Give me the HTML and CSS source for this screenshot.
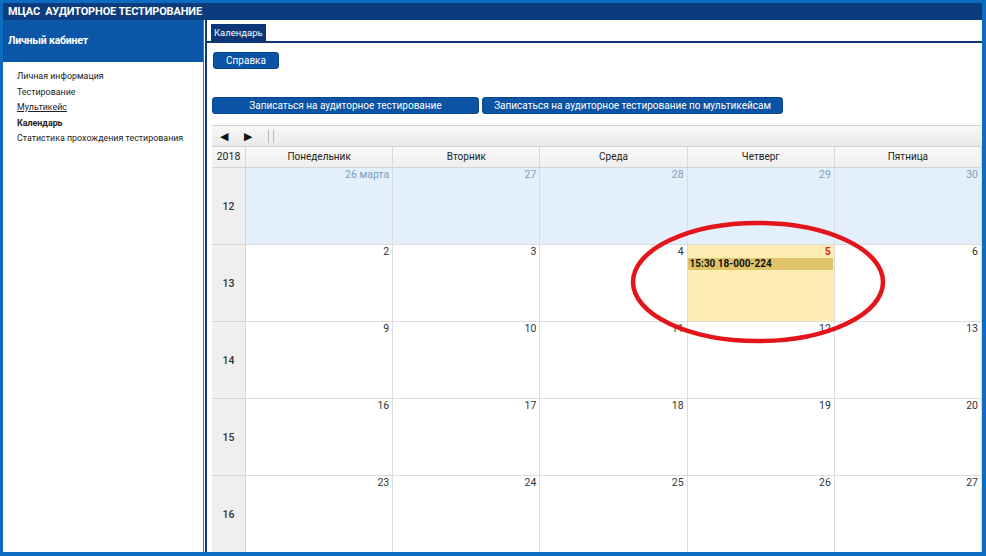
FILE: index.html
```html
<!DOCTYPE html>
<html lang="ru">
<head>
<meta charset="utf-8">
<title>МЦАС</title>
<link rel="stylesheet" href="styles.css">
</head>
<body>
<div class="frame">
  <header class="topbar">МЦАС&nbsp; АУДИТОРНОЕ ТЕСТИРОВАНИЕ</header>
  <div class="body">
    <aside class="sidebar">
      <div class="side-head">Личный кабинет</div>
      <ul class="menu">
        <li>Личная информация</li>
        <li>Тестирование</li>
        <li class="link">Мультикейс</li>
        <li class="active">Календарь</li>
        <li>Статистика прохождения тестирования</li>
      </ul>
    </aside>
    <main class="main">
      <div class="tabs"><span class="tab">Календарь</span></div>
      <div class="panel">
        <div class="help-row"><button class="btn btn-help">Справка</button></div>
        <div class="actions">
          <button class="btn btn-wide1">Записаться на аудиторное тестирование</button>
          <button class="btn btn-wide2">Записаться на аудиторное тестирование по мультикейсам</button>
        </div>
        <div class="calendar">
          <div class="toolbar">
            <span class="arrow">&#9664;</span>
            <span class="arrow">&#9654;</span>
            <span class="sep"></span><span class="sep"></span>
          </div>
          <div class="grid">
            <div class="hd year">2018</div>
            <div class="hd">Понедельник</div>
            <div class="hd">Вторник</div>
            <div class="hd">Среда</div>
            <div class="hd">Четверг</div>
            <div class="hd">Пятница</div>

            <div class="wk">12</div>
            <div class="day cur"><span class="num">26 марта</span></div>
            <div class="day cur"><span class="num">27</span></div>
            <div class="day cur"><span class="num">28</span></div>
            <div class="day cur"><span class="num">29</span></div>
            <div class="day cur"><span class="num">30</span></div>

            <div class="wk">13</div>
            <div class="day"><span class="num">2</span></div>
            <div class="day"><span class="num">3</span></div>
            <div class="day"><span class="num">4</span></div>
            <div class="day today"><span class="num red">5</span><div class="event">15:30 18-000-224</div></div>
            <div class="day"><span class="num">6</span></div>

            <div class="wk">14</div>
            <div class="day"><span class="num">9</span></div>
            <div class="day"><span class="num">10</span></div>
            <div class="day"><span class="num">11</span></div>
            <div class="day"><span class="num">12</span></div>
            <div class="day"><span class="num">13</span></div>

            <div class="wk">15</div>
            <div class="day"><span class="num">16</span></div>
            <div class="day"><span class="num">17</span></div>
            <div class="day"><span class="num">18</span></div>
            <div class="day"><span class="num">19</span></div>
            <div class="day"><span class="num">20</span></div>

            <div class="wk">16</div>
            <div class="day"><span class="num">23</span></div>
            <div class="day"><span class="num">24</span></div>
            <div class="day"><span class="num">25</span></div>
            <div class="day"><span class="num">26</span></div>
            <div class="day"><span class="num">27</span></div>
          </div>
        </div>
      </div>
    </main>
  </div>
  <svg class="ring" width="270" height="132" viewBox="0 0 270 132"><ellipse cx="135" cy="66" rx="125" ry="59" fill="none" stroke="#e4141b" stroke-width="4.5"/></svg>
</div>
</body>
</html>
```
FILE: styles.css
```css
* { box-sizing: border-box; }
html, body { margin: 0; padding: 0; }
body {
  font-family: Roboto, "Liberation Sans", Arial, sans-serif;
  background: #ffffff;
  width: 986px;
  height: 556px;
  overflow: hidden;
}
.frame {
  position: relative;
  width: 986px;
  height: 556px;
  border: 3px solid #0b6cc0;
  border-right-width: 4px;
  border-bottom-width: 4px;
  display: flex;
  flex-direction: column;
  overflow: hidden;
  background: #fff;
}
.topbar {
  height: 17px;
  flex: none;
  background: #0c3b7e;
  color: #fff;
  font-weight: 700;
  font-size: 11px;
  line-height: 17px;
  padding-left: 5px;
  letter-spacing: -0.15px;
}
.body {
  flex: 1;
  display: flex;
  min-height: 0;
}
.sidebar {
  width: 201px;
  flex: none;
  border-right: 1px solid #5a6e8c;
  margin-right: 1px;
}
.side-head {
  height: 42px;
  background: #0b57a7;
  color: #fff;
  font-weight: 700;
  font-size: 10.5px;
  line-height: 42px;
  padding-left: 5px;
  letter-spacing: -0.2px;
}
.menu {
  list-style: none;
  margin: 0;
  padding: 7px 0 0 14px;
}
.menu li {
  font-size: 8.9px;
  line-height: 15.5px;
  color: #222;
}
.menu li.link { text-decoration: underline; }
.menu li.active { font-weight: 700; }
.main {
  flex: 1;
  display: flex;
  flex-direction: column;
  min-width: 0;
}
.tabs {
  height: 21px;
  flex: none;
  display: flex;
  align-items: flex-end;
  padding-left: 4px;
  border-left: 2px solid #0c3b7e;
}
.tab {
  height: 17px;
  background: #0c3677;
  color: #fff;
  font-size: 9.5px;
  line-height: 17px;
  padding: 0 3px;
}
.panel {
  flex: 1;
  border-top: 2px solid #0c3677;
  border-left: 2px solid #0c3b7e;
  padding: 9px 0 0 5px;
  display: flex;
  flex-direction: column;
  min-height: 0;
}
.btn {
  font-family: Roboto, "Liberation Sans", Arial, sans-serif;
  background: #0b53a5;
  color: #fff;
  border: 1px solid #0a458a;
  border-radius: 3px;
  font-size: 10px;
  height: 17px;
  padding: 0;
  cursor: pointer;
}
.help-row { display: flex; padding-left: 1px; }
.btn-help { width: 66px; }
.actions {
  margin-top: 28px;
  display: flex;
  gap: 3px;
}
.btn-wide1 { width: 267px; }
.btn-wide2 { width: 301px; }
.calendar {
  margin-top: 11px;
  flex: 1;
  display: flex;
  flex-direction: column;
  min-height: 0;
  overflow: hidden;
}
.toolbar {
  height: 21px;
  flex: none;
  background: linear-gradient(#f8f8f8, #e9e9e9);
  border-top: 1px solid #d4d4d4;
  display: flex;
  align-items: center;
  padding-left: 8px;
}
.arrow {
  font-size: 11px;
  color: #111;
  width: 24px;
}
.sep {
  width: 1px;
  height: 13px;
  background: #b8b8b8;
  margin-right: 4px;
}
.sep:first-of-type { margin-left: -6px; }
.grid {
  display: grid;
  grid-template-columns: 34px repeat(5, 1fr);
  grid-template-rows: 21px repeat(5, 77px);
  border-top: 1px solid #d4d4d4;
}
.hd {
  background: linear-gradient(#fafafa, #eeeeee);
  border-right: 1px solid #d6d6d6;
  border-bottom: 1px solid #d6d6d6;
  font-size: 10px;
  color: #222;
  text-align: center;
  line-height: 20px;
}
.hd.year { font-size: 10.5px; }
.wk {
  background: #efefef;
  border-right: 1px solid #d6d6d6;
  border-bottom: 1px solid #d6d6d6;
  font-size: 10.5px;
  color: #333;
  display: flex;
  align-items: center;
  justify-content: center;
  font-weight: 500;
}
.day {
  border-right: 1px solid #dcdcdc;
  border-bottom: 1px solid #dcdcdc;
  display: flex;
  flex-direction: column;
  padding-top: 1px;
}
.day.cur { background: #e3effb; }
.day.cur .num { color: #7d9dc0; }
.num {
  font-size: 10.5px;
  color: #333;
  text-align: right;
  padding-right: 3px;
  line-height: 12px;
}
.num.red { color: #e02020; font-weight: 700; }
.day.today { background: #fdedb3; }
.event {
  background: #dfc46b;
  color: #111;
  font-weight: 700;
  font-size: 10px;
  line-height: 12px;
  padding-left: 2px;
  margin-right: 1px;
}
.ring {
  position: absolute;
  left: 620px;
  top: 213px;
}
```
